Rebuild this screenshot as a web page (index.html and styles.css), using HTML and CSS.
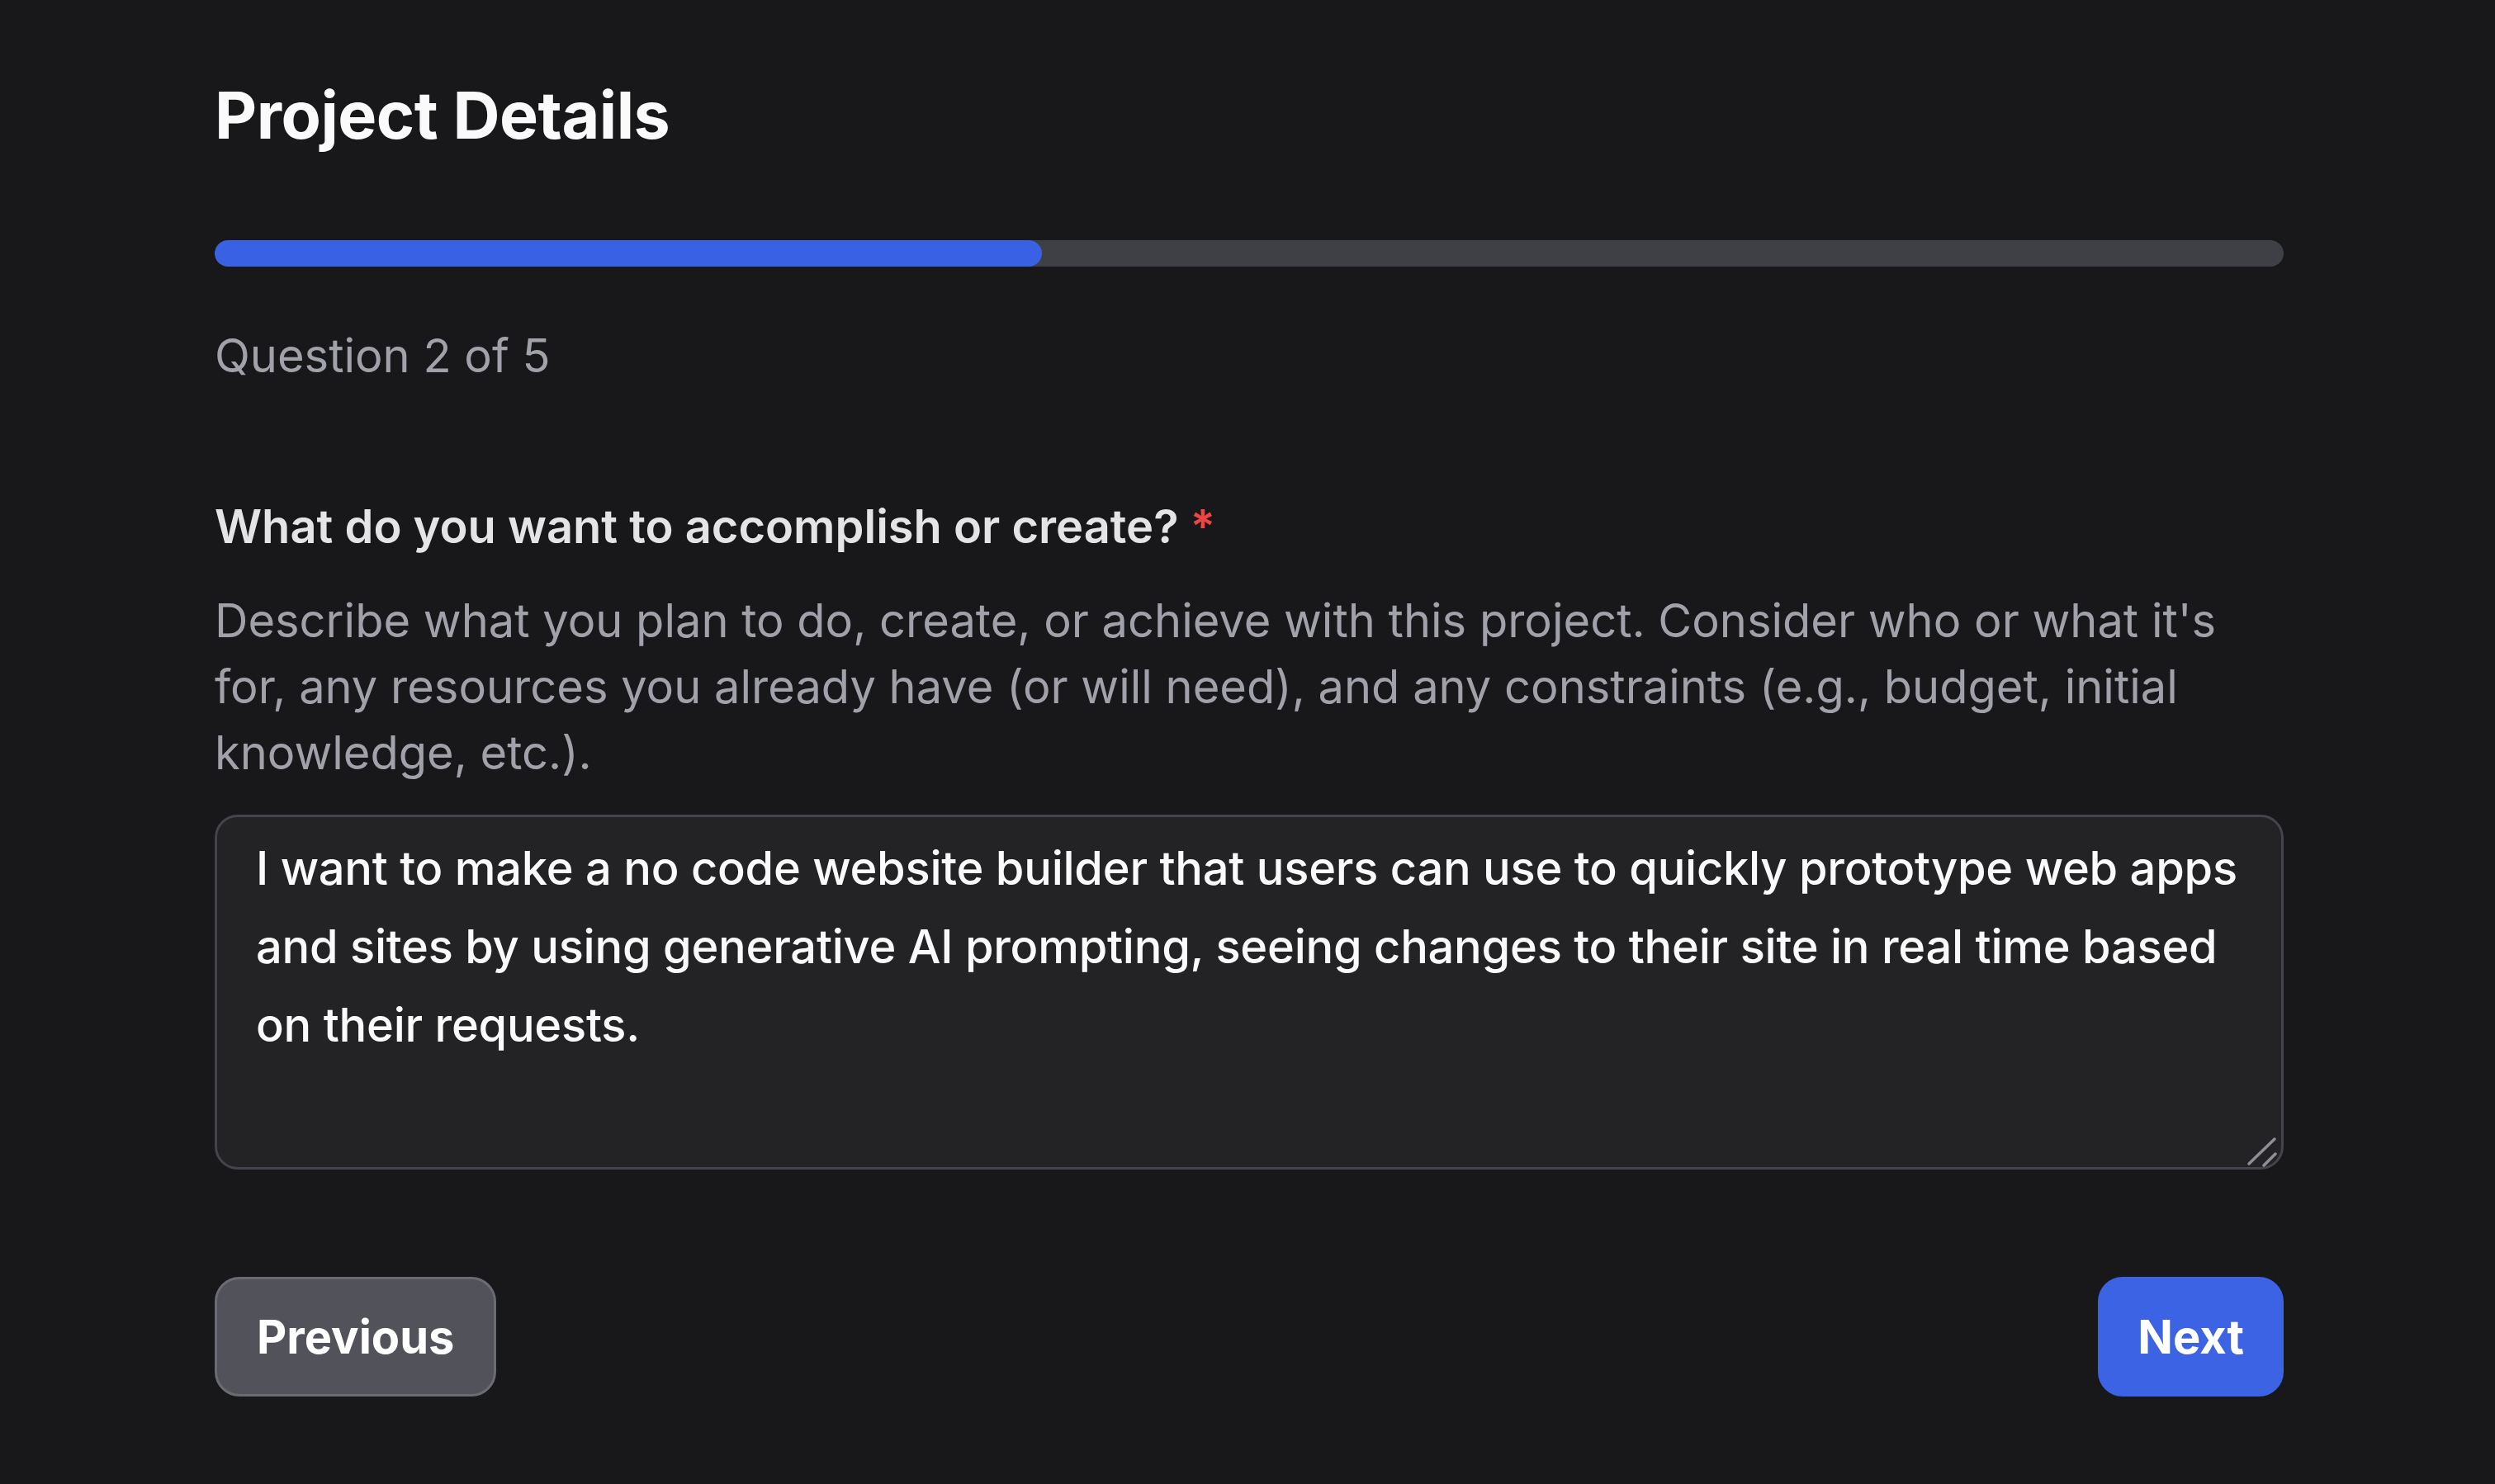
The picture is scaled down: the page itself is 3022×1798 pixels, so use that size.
FILE: index.html
```html
<!DOCTYPE html>
<html lang="en">
<head>
<meta charset="utf-8">
<title>Project Details</title>
<link rel="stylesheet" href="styles.css">
</head>
<body>
<main class="wizard">
  <h1 class="title">Project Details</h1>
  <div class="progress"><div class="progress-fill" style="width: 40%"></div></div>
  <p class="step">Question 2 of 5</p>
  <label class="label" for="q2">What do you want to accomplish or create? <span class="req">*</span></label>
  <p class="help">Describe what you plan to do, create, or achieve with this project. Consider who or what it's for, any resources you already have (or will need), and any constraints (e.g., budget, initial knowledge, etc.).</p>
  <div class="field">
    <textarea id="q2" class="answer">I want to make a no code website builder that users can use to quickly prototype web apps and sites by using generative AI prompting, seeing changes to their site in real time based on their requests.</textarea>
    <svg class="grip" width="40" height="40" viewBox="0 0 40 40" aria-hidden="true">
      <line x1="4" y1="36" x2="35" y2="6" />
      <line x1="22" y1="38" x2="36" y2="24" />
    </svg>
  </div>
  <div class="actions">
    <button class="btn btn-secondary" type="button">Previous</button>
    <button class="btn btn-primary" type="button">Next</button>
  </div>
</main>
</body>
</html>
```

FILE: styles.css
```css
html, body {
  margin: 0;
  padding: 0;
  background: #18181b;
}

body {
  font-family: Inter, "Noto Sans", "Liberation Sans", sans-serif;
  color: #fafafa;
}

.wizard {
  width: 2506px;
  margin: 0 0 0 260px;
  padding-top: 92px;
  display: flex;
  flex-direction: column;
}

.title {
  margin: 0;
  font-size: 79px;
  line-height: 94px;
  font-weight: 700;
  color: #fafafa;
  letter-spacing: -0.5px;
}

.progress {
  margin-top: 105px;
  height: 32px;
  border-radius: 16px;
  background: #3f3f46;
  overflow: hidden;
}

.progress-fill {
  height: 100%;
  background: #3862e3;
  border-radius: 16px;
}

.step {
  margin: 68px 0 0;
  font-size: 56px;
  line-height: 80px;
  color: #a1a1aa;
}

.label {
  margin-top: 127px;
  font-size: 56px;
  line-height: 80px;
  font-weight: 600;
  color: #e4e4e7;
}

.req {
  color: #ef4444;
}

.help {
  margin: 34px 0 0;
  font-size: 56px;
  line-height: 80px;
  color: #a1a1aa;
}

.field {
  position: relative;
  margin-top: 35px;
}

.answer {
  display: block;
  box-sizing: border-box;
  width: 100%;
  height: 430px;
  margin: 0;
  padding: 15px 6px 15px 47px;
  border: 3px solid #44444c;
  border-radius: 28px;
  background: #232326;
  color: #fafafa;
  font-family: Inter, "Noto Sans", "Liberation Sans", sans-serif;
  font-size: 56px;
  line-height: 95px;
  font-weight: 500;
  letter-spacing: -0.25px;
  resize: none;
  outline: none;
  overflow: hidden;
}

.grip {
  position: absolute;
  right: 6px;
  bottom: 3px;
  stroke: #8e8e95;
  stroke-width: 3.5;
  stroke-linecap: round;
}

.actions {
  margin-top: 130px;
  display: flex;
  justify-content: space-between;
  align-items: center;
}

.btn {
  box-sizing: border-box;
  height: 145px;
  padding: 0 48px;
  border-radius: 30px;
  font-family: Inter, "Noto Sans", "Liberation Sans", sans-serif;
  font-size: 56px;
  font-weight: 700;
  color: #ffffff;
  cursor: pointer;
}

.btn-secondary {
  background: #52525b;
  border: 3px solid #6b6b73;
}

.btn-primary {
  padding: 0 45px;
  background: #3b63e3;
  border: 3px solid #3b63e3;
}
```
